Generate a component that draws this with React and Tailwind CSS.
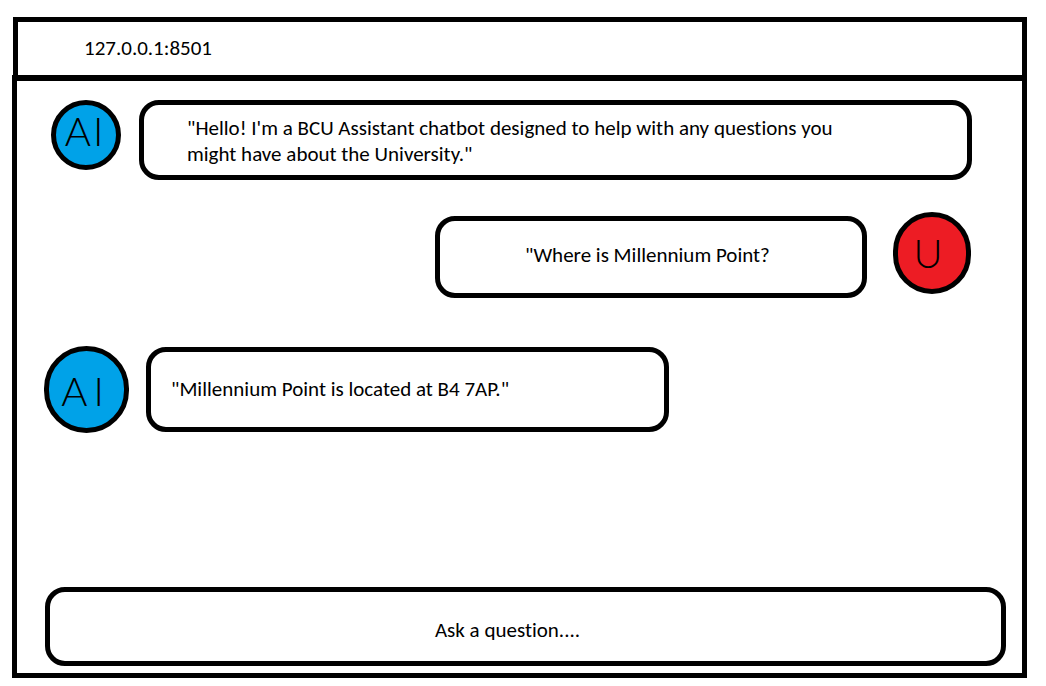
import React from "react";

function Avatar({ letters, label, className }) {
  return (
    <div
      role="img"
      aria-label={label}
      className={`flex shrink-0 justify-center rounded-full border-[5px] border-black font-['Lato',sans-serif] text-[40px] leading-[36px] font-light ${className}`}
    >
      {letters.map((letter) => (
        <span key={letter}>{letter}</span>
      ))}
    </div>
  );
}

function Bubble({ className, children }) {
  return (
    <p className={`flex items-center rounded-[20px] border-[5px] border-black ${className}`}>
      {children}
    </p>
  );
}

export default function App() {
  return (
    <div className="flex min-h-screen flex-col bg-white pt-[17px] pr-[19px] pb-2 pl-3 font-['Carlito','Lato',sans-serif] text-[21px] leading-[26px] text-black [font-variant-ligatures:none]">
      <header className="ml-px flex h-[58px] items-center border-x-[5px] border-t-[5px] border-black pb-0.5 pl-[66px]">
        127.0.0.1:8501
      </header>

      <main className="flex grow flex-col border-x-[5px] border-t-[6px] border-b-[5px] border-black pt-[19px] pb-[7px]">
        <div className="flex items-start gap-[18px] pr-[50px] pl-[34px]">
          <Avatar
            letters={["A", "I"]}
            label="AI"
            className="size-[70px] gap-0.5 bg-[#00a2e8] pt-2 pr-1"
          />
          <Bubble className="min-h-20 flex-1 pt-0.5 pr-[120px] pl-[43px]">
            "Hello! I'm a BCU Assistant chatbot designed to help with any questions you might have about
            the University."
          </Bubble>
        </div>

        <div className="mt-8 flex items-end justify-end gap-[26px] pr-[51px]">
          <Bubble className="mt-1 min-h-[82px] w-[432px] pb-1 pl-[85px]">"Where is Millennium Point?</Bubble>
          <Avatar
            letters={["U"]}
            label="User"
            className="h-[82px] w-[78px] self-start bg-[#ed1c24] pt-[18px] pr-2"
          />
        </div>

        <div className="mt-12 flex items-center gap-[17px] pl-[27px]">
          <Avatar
            letters={["A", "I"]}
            label="AI"
            className="h-[87px] w-[85px] gap-1.5 bg-[#00a2e8] pt-[22px] pr-2"
          />
          <Bubble className="min-h-[85px] w-[523px] pb-0.5 pl-5">"Millennium Point is located at B4 7AP."</Bubble>
        </div>

        <form className="mt-auto pr-4 pl-7" onSubmit={(event) => event.preventDefault()}>
          <input
            type="text"
            aria-label="Ask a question"
            placeholder="Ask a question...."
            className="block h-[79px] w-full rounded-[20px] border-[5px] border-black bg-white pt-1.5 pr-9 text-center outline-none placeholder:text-black placeholder:opacity-100"
          />
        </form>
      </main>
    </div>
  );
}
